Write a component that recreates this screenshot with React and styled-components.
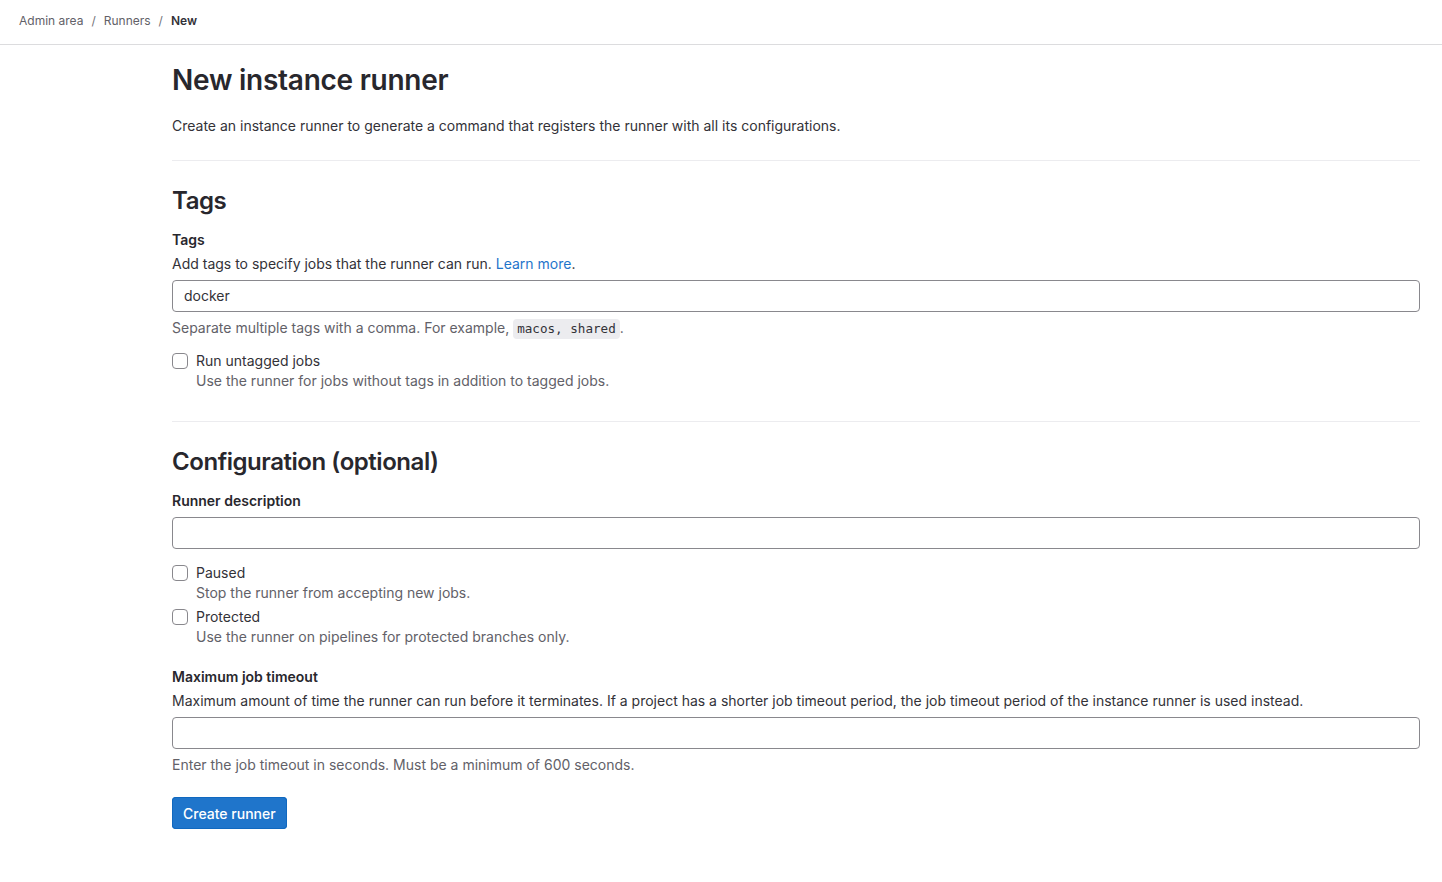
import React from 'react'
import { styled, createGlobalStyle } from 'styled-components';

const GlobalStyle = createGlobalStyle`
  html, body {
    margin: 0;
    padding: 0;
    background: #fff;
  }
  body {
    font-family: Inter, "Noto Sans", "Liberation Sans", sans-serif;
    font-size: 14px;
    line-height: 20px;
    color: #333238;
  }
  * { box-sizing: border-box; }
`;

const checkboxes = {
  tags: [
    { id: 'untagged', label: 'Run untagged jobs', help: 'Use the runner for jobs without tags in addition to tagged jobs.' },
  ],
  config: [
    { id: 'paused', label: 'Paused', help: 'Stop the runner from accepting new jobs.' },
    { id: 'protected', label: 'Protected', help: 'Use the runner on pipelines for protected branches only.' },
  ],
};

const CheckOption = ({ id, label, help }) => (
  <CheckRow>
    <CheckBox type="checkbox" id={id} />
    <CheckText>
      <CheckLabel htmlFor={id}>{label}</CheckLabel>
      <HelpText $flush>{help}</HelpText>
    </CheckText>
  </CheckRow>
);

const App = () => {
  return (
    <>
      <GlobalStyle />
      <TopBar>
        <Crumb href="#">Admin area</Crumb>
        <Sep>/</Sep>
        <Crumb href="#">Runners</Crumb>
        <Sep>/</Sep>
        <Crumb $current>New</Crumb>
      </TopBar>

      <Page>
        <Title>New instance runner</Title>
        <Lead>Create an instance runner to generate a command that registers the runner with all its configurations.</Lead>

        <Divider />

        <SectionTitle>Tags</SectionTitle>
        <FieldLabel>Tags</FieldLabel>
        <FieldDesc>
          Add tags to specify jobs that the runner can run. <Link href="#">Learn more</Link>.
        </FieldDesc>
        <TextInput defaultValue="docker" />
        <HelpText>
          Separate multiple tags with a comma. For example, <Code>macos, shared</Code>.
        </HelpText>
        <CheckGroup $top={12}>
          {checkboxes.tags.map((c) => <CheckOption key={c.id} {...c} />)}
        </CheckGroup>

        <Divider $top={30} />

        <SectionTitle>Configuration (optional)</SectionTitle>
        <FieldLabel $gap={6}>Runner description</FieldLabel>
        <TextInput />
        <CheckGroup $top={14}>
          {checkboxes.config.map((c) => <CheckOption key={c.id} {...c} />)}
        </CheckGroup>

        <FieldLabel $top={20}>Maximum job timeout</FieldLabel>
        <FieldDesc>
          Maximum amount of time the runner can run before it terminates. If a project has a shorter job timeout period, the job timeout period of the instance runner is used instead.
        </FieldDesc>
        <TextInput />
        <HelpText>Enter the job timeout in seconds. Must be a minimum of 600 seconds.</HelpText>

        <PrimaryButton>Create runner</PrimaryButton>
      </Page>
    </>
  )
}

export default App;

const TopBar = styled.nav`
  display: flex;
  align-items: center;
  gap: 8px;
  height: 45px;
  padding: 0 19px 2px;
  border-bottom: 1px solid #dcdcde;
  font-size: 12px;
`;

const Crumb = styled.a`
  color: ${(p) => (p.$current ? '#333238' : '#626168')};
  font-weight: ${(p) => (p.$current ? 600 : 400)};
  text-decoration: none;
`;

const Sep = styled.span`
  color: #737278;
`;

const Page = styled.main`
  display: flex;
  flex-direction: column;
  align-items: stretch;
  padding: 17px 22px 40px 172px;
`;

const Title = styled.h1`
  margin: 0;
  font-size: 28px;
  line-height: 36px;
  font-weight: 600;
  color: #28272d;
  letter-spacing: -0.25px;
`;

const Lead = styled.p`
  margin: 18px 0 0;
`;

const Divider = styled.hr`
  width: 100%;
  margin: ${(p) => p.$top ?? 24}px 0 0;
  border: 0;
  border-top: 1px solid #ececef;
`;

const SectionTitle = styled.h2`
  margin: 24px 0 0;
  font-size: 24px;
  line-height: 32px;
  font-weight: 600;
  color: #28272d;
  letter-spacing: -0.45px;
`;

const FieldLabel = styled.label`
  display: block;
  margin: ${(p) => p.$top ?? 13}px 0 ${(p) => p.$gap ?? 4}px;
  font-weight: 600;
  color: #28272d;
`;

const FieldDesc = styled.p`
  margin: 0 0 6px;
`;

const Link = styled.a`
  color: #1f75cb;
  text-decoration: none;
`;

const TextInput = styled.input`
  width: 100%;
  height: 32px;
  padding: 0 11px 1px;
  border: 1px solid #89888d;
  border-radius: 4px;
  font-family: inherit;
  font-size: 14px;
  color: #333238;
  background: #fff;
  outline: none;
`;

const HelpText = styled.p`
  margin: ${(p) => (p.$flush ? 0 : '6px 0 0')};
  color: #626168;
`;

const Code = styled.code`
  display: inline-block;
  padding: 0 4px;
  border-radius: 4px;
  background: #ececef;
  font-family: "DejaVu Sans Mono", "Liberation Mono", monospace;
  font-size: 12.6px;
  line-height: 20px;
  color: #333238;
`;

const CheckGroup = styled.div`
  display: flex;
  flex-direction: column;
  gap: 4px;
  margin-top: ${(p) => p.$top}px;
`;

const CheckRow = styled.div`
  display: flex;
  align-items: flex-start;
  gap: 8px;
`;

const CheckBox = styled.input`
  appearance: none;
  flex: none;
  width: 16px;
  height: 16px;
  margin: 2px 0 0;
  border: 1px solid #89888d;
  border-radius: 4px;
  background: #fff;
`;

const CheckText = styled.div`
  display: flex;
  flex-direction: column;
`;

const CheckLabel = styled.label`
  color: #333238;
`;

const PrimaryButton = styled.button`
  align-self: flex-start;
  margin-top: 22px;
  height: 32px;
  padding: 0 11px;
  border: 0;
  border-radius: 4px;
  background: #1f75cb;
  color: #fff;
  font-family: inherit;
  font-size: 14px;
  font-weight: 500;
  box-shadow: inset 0 0 0 1px #1068bf;
  cursor: pointer;
`;
